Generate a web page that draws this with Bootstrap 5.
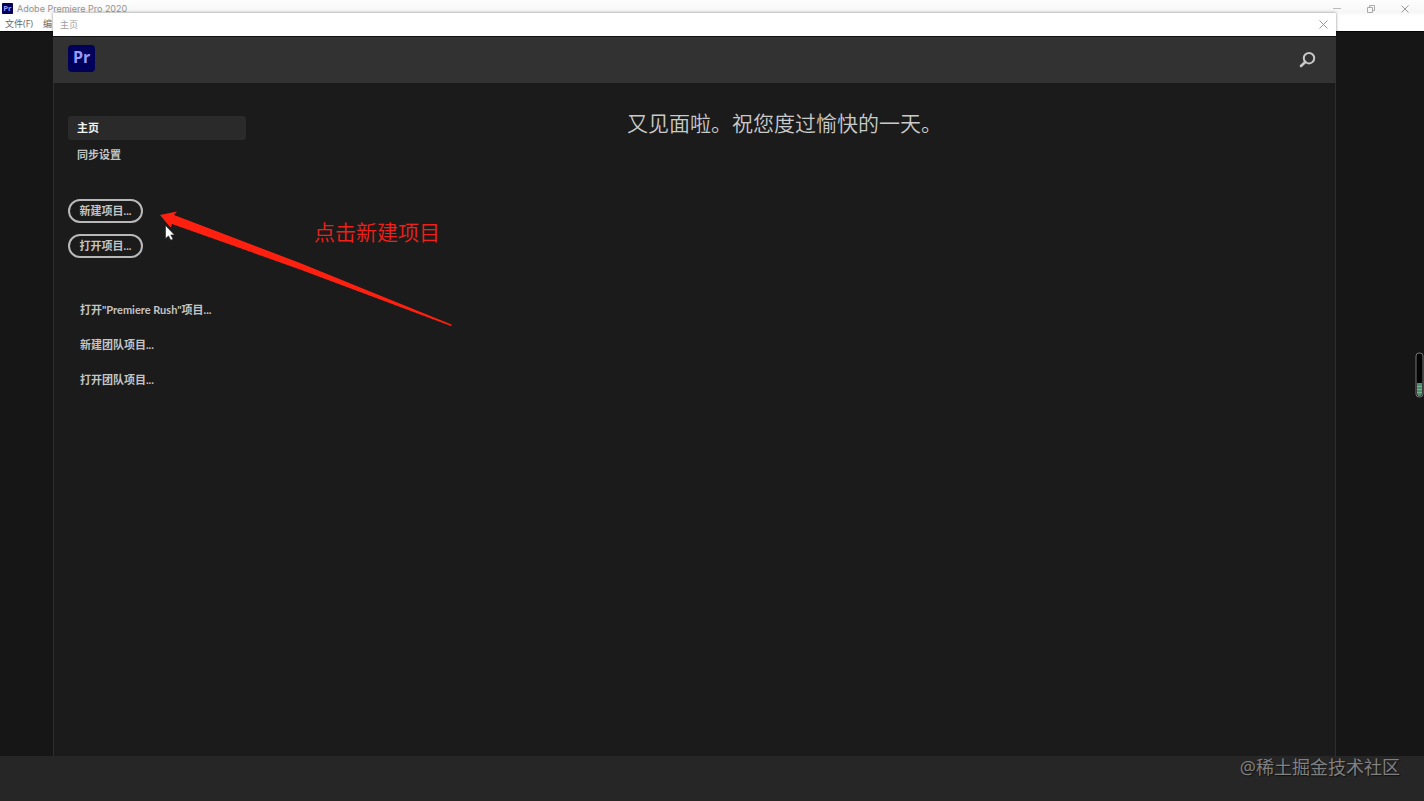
<!DOCTYPE html>
<html lang="zh-CN">
<head>
<meta charset="utf-8">
<meta name="viewport" content="width=device-width, initial-scale=1">
<title>Adobe Premiere Pro 2020</title>
<link href="https://cdn.jsdelivr.net/npm/bootstrap@5.3.0/dist/css/bootstrap.min.css" rel="stylesheet">
<style>
  body { font-family: "Open Sans", "Noto Sans CJK SC", sans-serif; background: #161616; color: #c8c8c8; }
  button, a { font-family: inherit; }
  .icon-btn { background: none; border: 0; padding: 0; line-height: 0; }
  .app-top { height: 32px; background: linear-gradient(#fefefe, #f6f6f6 12px, #fff 16px); color: #949494; border-bottom: 1px solid #050505; }
  .title-row { height: 17px; line-height: 17px; padding-left: 2px; padding-right: 14px; font-family: Inter, sans-serif; font-size: 9px; }
  .window-btns { gap: 24px; }
  .menu-row { height: 14px; line-height: 14px; padding-left: 5px; gap: 10px; font-size: 9px; }
  .menu-row a { color: #666; }
  .app-foot { height: 45px; background: #262626; }

  .home-dialog { top: 13px; left: 53px; right: 88px; bottom: 45px; background: #1b1b1b; }
  .dialog-title { height: 23px; background: #fff; color: #a0a0a0; font-size: 9px; padding: 0 8px 0 7px; box-shadow: 0 0 3px rgba(0, 0, 0, .45); }
  .dialog-head { height: 47px; background: #323232; border-top: 1px solid #111; padding: 0 20px 0 15px; }
  .dialog-main { border-left: 1px solid #2e2e2e; border-right: 1px solid #2e2e2e; }
  .pr-logo { font-family: "Open Sans", sans-serif; font-weight: 700; fill: #9b9bff; }
  .side-col { width: 192px; padding: 33px 0 0 14px; font-family: Lato, "Noto Sans CJK SC", sans-serif; font-size: 11px; font-weight: 700; }
  .side-link { height: 24px; line-height: 24px; padding-left: 9px; border-radius: 3px; color: #c4c4c4; margin-bottom: 3px; }
  .side-link.current { background: #2a2a2a; color: #f2f2f2; }
  .pill { width: 75px; height: 24px; padding: 0; font-size: 11px; line-height: 18px; font-weight: 700; color: #c4c4c4; border: 2px solid #b8b8b8; border-radius: 12px; background: none; }
  .pill:hover { color: #fff; border-color: #fff; }
  .pills { gap: 11px; padding-top: 29px; }
  .team-links { gap: 11px; padding: 40px 0 0 12px; line-height: 24px; }
  .team-links a { color: #c4c4c4; }
  .greeting { font-size: 21px; line-height: 32px; font-weight: 350; color: #cacaca; padding: 24px 12px 0 0; }

  .arrow-note { left: 156px; top: 205px; pointer-events: none; }
  .note-text { left: 314px; top: 216px; font-size: 21px; line-height: 32px; font-weight: 350; color: #f02018; }
  .credit { right: 24px; bottom: 20px; font-size: 18px; line-height: 28px; color: #808080; text-shadow: 1px 1px 1px #111; }
  .meter { right: 0; top: 352px; }
</style>
</head>
<body>
<div class="position-relative vh-100 d-flex flex-column overflow-hidden">
  <header class="app-top">
    <div class="title-row d-flex align-items-center">
      <svg width="11" height="11" viewBox="0 0 27 27" aria-hidden="true"><rect width="27" height="27" rx="2" fill="#00005b"/><text class="pr-logo" x="3" y="20" font-size="19">Pr</text></svg>
      <span class="ms-1">Adobe Premiere Pro 2020</span>
      <div class="window-btns d-flex ms-auto">
        <button class="icon-btn" type="button" aria-label="最小化"><svg width="10" height="10" viewBox="0 0 10 10" stroke="#bbb" fill="none"><path d="M1 4.500h8"/></svg></button>
        <button class="icon-btn" type="button" aria-label="还原"><svg width="10" height="10" viewBox="0 0 10 10" stroke="#aaa" fill="none"><path d="M1.500 3.500h5v5h-5zM3.500 3.500v-2h5v5h-2"/></svg></button>
        <button class="icon-btn" type="button" aria-label="关闭"><svg width="10" height="10" viewBox="0 0 10 10" stroke="#999" fill="none"><path d="M1.500 1.500l7 7m0-7l-7 7"/></svg></button>
      </div>
    </div>
    <nav class="menu-row d-flex" aria-label="菜单">
      <a class="text-decoration-none" href="#">文件(F)</a>
      <a class="text-decoration-none" href="#">编</a>
    </nav>
  </header>
  <div class="flex-grow-1"></div>
  <footer class="app-foot"></footer>

  <section class="home-dialog position-absolute d-flex flex-column" aria-label="主页">
    <div class="dialog-title d-flex align-items-center justify-content-between">
      <span>主页</span>
      <button class="icon-btn" type="button" aria-label="关闭"><svg width="9" height="9" viewBox="0 0 9 9" stroke="#999" fill="none"><path d="M.5 .5l8 8m0-8l-8 8"/></svg></button>
    </div>
    <div class="dialog-head d-flex align-items-center justify-content-between">
      <svg class="mb-1" width="27" height="27" viewBox="0 0 27 27" role="img" aria-label="Pr"><rect width="27" height="27" rx="4" fill="#00005b"/><text class="pr-logo" x="5" y="18" font-size="16">Pr</text></svg>
      <button class="icon-btn" type="button" aria-label="搜索"><svg width="17" height="17" viewBox="0 0 17 17" fill="none" stroke="#c8c8c8" stroke-width="2"><circle cx="10" cy="6.200" r="5.200"/><path d="M6.300 10L2 14" stroke-width="2.600" stroke-linecap="round"/></svg></button>
    </div>
    <div class="dialog-main d-flex flex-grow-1">
      <aside class="side-col flex-shrink-0">
        <nav class="d-flex flex-column">
          <a class="side-link current text-decoration-none" href="#" aria-current="page">主页</a>
          <a class="side-link text-decoration-none" href="#">同步设置</a>
        </nav>
        <div class="pills d-flex flex-column align-items-start">
          <button class="pill" type="button">新建项目...</button>
          <button class="pill" type="button">打开项目...</button>
        </div>
        <div class="team-links d-flex flex-column align-items-start text-nowrap">
          <a class="text-decoration-none" href="#">打开"Premiere Rush"项目...</a>
          <a class="text-decoration-none" href="#">新建团队项目...</a>
          <a class="text-decoration-none" href="#">打开团队项目...</a>
        </div>
      </aside>
      <main class="flex-grow-1 text-center">
        <h1 class="greeting m-0">又见面啦。祝您度过愉快的一天。</h1>
      </main>
    </div>
  </section>

  <svg class="arrow-note position-absolute" width="300" height="125" viewBox="156 205 300 125" aria-hidden="true">
    <path d="M160 215L177 211.500L174 215L300 263L452 324.800L451 326L300 269.500L172 224L170.500 227.500Z" fill="#ff2010"/>
    <path d="M165.500 225.500v13l3-2.600 2.300 4.300 2.200-1.100-2.200-4.200h3.700z" fill="#fff" stroke="#222" stroke-width=".6"/>
  </svg>
  <div class="note-text position-absolute">点击新建项目</div>
  <svg class="meter position-absolute" width="9" height="46" viewBox="0 0 9 46" aria-hidden="true">
    <rect x="1" y="1" width="7" height="44" rx="3" fill="#050505" stroke="#777"/>
    <path d="M2 31h5v11l-1 2h-3l-1-2z" fill="#4f8f70"/><path d="M2 34.500h5M2 37.500h5M2 40.500h5" stroke="#7cae95"/>
  </svg>
  <div class="credit position-absolute">@稀土掘金技术社区</div>
</div>
<script src="https://cdn.jsdelivr.net/npm/bootstrap@5.3.0/dist/js/bootstrap.bundle.min.js"></script>
</body>
</html>
